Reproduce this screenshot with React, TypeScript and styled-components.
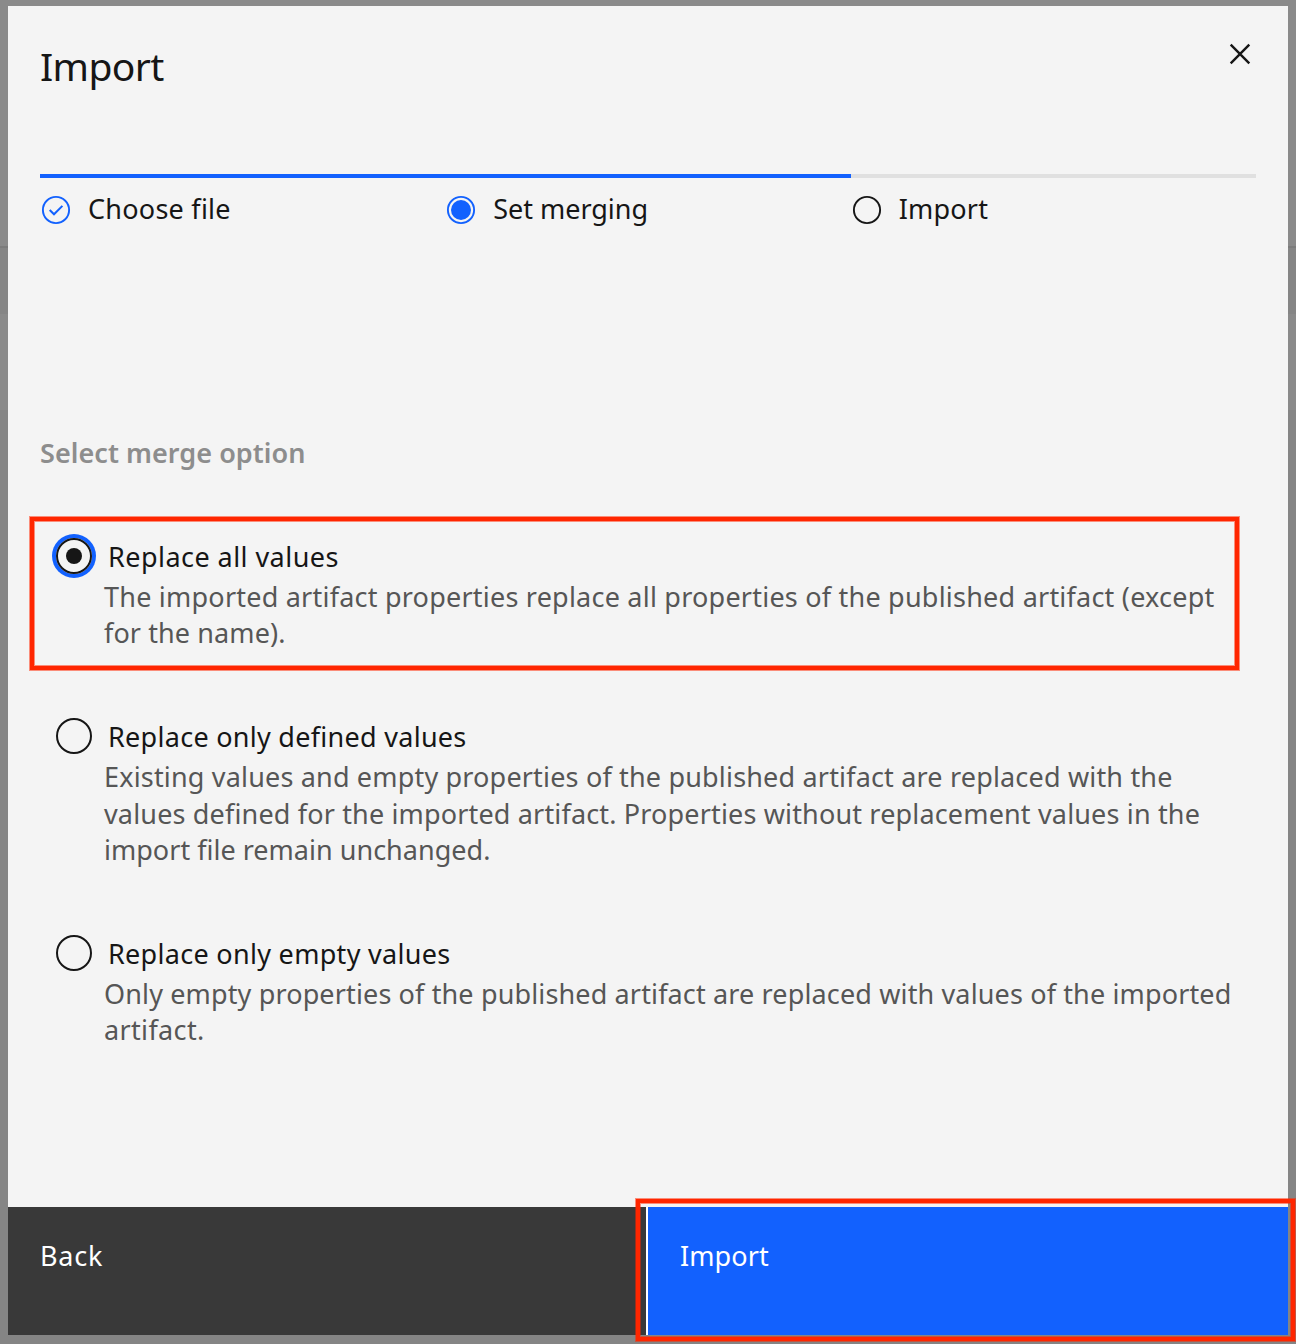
import React from "react";
import styled, { createGlobalStyle, css } from "styled-components";

const ink = "#161616";
const blue = "#1261fe";
const red = "#ff2600";

const GlobalStyle = createGlobalStyle`
  *, *::before, *::after { box-sizing: border-box; }
  body { margin: 0; font-family: "Noto Sans", "Open Sans", sans-serif; }
  button { font: inherit; border: 0; cursor: pointer; }
`;

/* The dimmed page behind the dialog keeps faint bands of its table rows. */
const Overlay = styled.div`
  position: relative;
  width: 1296px;
  height: 1344px;
  padding: 6px 8px 9px;
  overflow: hidden;
  background: linear-gradient(
    #8a8a8a 246px,
    #7c7c7c 246px 248px,
    #858585 248px 314px,
    #8a8a8a 314px 410px,
    #858585 410px
  );
`;

const Dialog = styled.section`
  display: flex;
  flex-direction: column;
  height: 100%;
  background: #f4f4f4;
  color: ${ink};
`;

const Header = styled.header`
  display: flex;
  justify-content: space-between;
  align-items: flex-start;
  height: 168px;
  padding: 32px 32px 0;
`;

const Title = styled.h1`
  margin: 0;
  font-size: 39px;
  font-weight: 400;
  line-height: 56px;
  letter-spacing: -0.6px;
`;

const CloseButton = styled.button`
  display: flex;
  padding: 0;
  background: none;
  color: ${ink};
`;

const Steps = styled.ol`
  display: grid;
  grid-template-columns: repeat(3, 1fr);
  height: 261px;
  margin: 0 32px;
  padding: 0;
  list-style: none;
`;

const Step = styled.li<{ $reached: boolean }>`
  display: flex;
  align-items: flex-start;
  gap: 16px;
  padding-top: 14px;
  border-top: 4px solid ${(p) => (p.$reached ? blue : "#e0e0e0")};
  svg { flex: none; margin-top: 2px; }
`;

const StepLabel = styled.span<{ $tracking: number }>`
  font-size: 27px;
  line-height: 36px;
  margin-top: -1px;
  letter-spacing: ${(p) => p.$tracking}px;
`;

const Fieldset = styled.div`
  flex: 1;
  padding: 0 32px;
`;

const Legend = styled.h2`
  margin: 0 0 65px;
  font-size: 27px;
  font-weight: 600;
  line-height: 36px;
  letter-spacing: 0.05px;
  color: #8d8d8d;
`;

const Option = styled.div`
  position: relative;
  padding: 2px 0 0 16px;
  margin-bottom: 64.75px;
`;

const OptionHead = styled.label`
  display: flex;
  align-items: flex-start;
  gap: 16px;
  height: 41px;
`;

const Radio = styled.span<{ $checked?: boolean }>`
  flex: none;
  display: grid;
  place-items: center;
  width: 36px;
  height: 36px;
  border: 2px solid ${ink};
  border-radius: 50%;
  ${(p) =>
    p.$checked &&
    css`
      box-shadow: 0 0 0 4px ${blue};
      &::after {
        content: "";
        width: 16px;
        height: 16px;
        border-radius: 50%;
        background: ${ink};
      }
    `}
`;

const OptionLabel = styled.span<{ $tracking: number }>`
  font-size: 27px;
  line-height: 38px;
  letter-spacing: ${(p) => p.$tracking}px;
`;

const Description = styled.p`
  margin: 0;
  padding-left: 48px;
  color: #565656;
  font-size: 27px;
  line-height: 36.25px;
  white-space: nowrap;
`;

const Line = styled.span<{ $tracking: number }>`
  display: block;
  letter-spacing: ${(p) => p.$tracking}px;
`;

const Highlight = styled.span`
  position: absolute;
  border: 4px solid ${red};
  box-shadow: 0 0 0 1px rgba(255, 38, 0, 0.5), inset 0 0 0 1px rgba(255, 38, 0, 0.5);
  pointer-events: none;
`;

const OptionHighlight = styled(Highlight)`
  top: -19px;
  left: -10px;
  width: 1209px;
  height: 153px;
`;

const ButtonHighlight = styled(Highlight)`
  right: 1px;
  bottom: 3px;
  width: 659px;
  height: 142px;
`;

const Footer = styled.footer`
  display: flex;
  height: 128px;
  background: #393939;
`;

const FooterButton = styled.button<{ $primary?: boolean; $tracking: number }>`
  flex: none;
  width: ${(p) => (p.$primary ? 642 : 638)}px;
  display: flex;
  align-items: flex-start;
  padding: 31px 32px;
  color: #fff;
  background: ${(p) => (p.$primary ? blue : "#393939")};
  border-left: ${(p) => (p.$primary ? "2px solid #fff" : "0")};
  font-size: 27px;
  line-height: 36px;
  letter-spacing: ${(p) => p.$tracking}px;
`;

type StepState = "complete" | "current" | "incomplete";

/* Step markers on a 16-unit grid, drawn at 32px. */
const StepIcon = ({ state }: { state: StepState }) => (
  <svg width="32" height="32" viewBox="0 0 16 16" fill="none">
    <circle cx="8" cy="8" r="6.55" stroke={state === "incomplete" ? ink : blue} strokeWidth="0.95" />
    {state === "complete" && <path d="M4.85 8l2.15 2.15 4.2-4.2" stroke={blue} strokeWidth="1" />}
    {state === "current" && <circle cx="8" cy="8" r="5" fill={blue} />}
  </svg>
);

const steps: { label: string; state: StepState; tracking: number }[] = [
  { label: "Choose file", state: "complete", tracking: 0.25 },
  { label: "Set merging", state: "current", tracking: -0.03 },
  { label: "Import", state: "incomplete", tracking: 0.2 },
];

const options: {
  label: string;
  tracking: number;
  checked?: boolean;
  lines: [string, number][];
}[] = [
  {
    label: "Replace all values",
    tracking: 0.45,
    checked: true,
    lines: [
      ["The imported artifact properties replace all properties of the published artifact (except", 0.223],
      ["for the name).", 0.1],
    ],
  },
  {
    label: "Replace only defined values",
    tracking: 0.28,
    lines: [
      ["Existing values and empty properties of the published artifact are replaced with the", 0.175],
      ["values defined for the imported artifact. Properties without replacement values in the", 0.159],
      ["import file remain unchanged.", 0.015],
    ],
  },
  {
    label: "Replace only empty values",
    tracking: 0.3,
    lines: [
      ["Only empty properties of the published artifact are replaced with values of the imported", 0.138],
      ["artifact.", 0.356],
    ],
  },
];

export default function App() {
  return (
    <Overlay>
      <GlobalStyle />
      <Dialog role="dialog" aria-label="Import">
        <Header>
          <Title>Import</Title>
          <CloseButton aria-label="Close">
            <svg width="32" height="32" viewBox="0 0 32 32" stroke="currentColor" strokeWidth="2.4">
              <path d="M6.7 6.7l18.6 18.6M25.3 6.7L6.7 25.3" />
            </svg>
          </CloseButton>
        </Header>
        <Steps>
          {steps.map((s) => (
            <Step key={s.label} $reached={s.state !== "incomplete"}>
              <StepIcon state={s.state} />
              <StepLabel $tracking={s.tracking}>{s.label}</StepLabel>
            </Step>
          ))}
        </Steps>
        <Fieldset>
          <Legend>Select merge option</Legend>
          {options.map((o) => (
            <Option key={o.label}>
              <OptionHead>
                <Radio $checked={o.checked} />
                <OptionLabel $tracking={o.tracking}>{o.label}</OptionLabel>
              </OptionHead>
              <Description>
                {o.lines.map(([text, tracking]) => (
                  <Line key={text} $tracking={tracking}>
                    {text}
                  </Line>
                ))}
              </Description>
              {o.checked && <OptionHighlight />}
            </Option>
          ))}
        </Fieldset>
        <Footer>
          <FooterButton $tracking={0.78}>Back</FooterButton>
          <FooterButton $primary $tracking={0.1}>
            Import
          </FooterButton>
        </Footer>
      </Dialog>
      <ButtonHighlight />
    </Overlay>
  );
}
